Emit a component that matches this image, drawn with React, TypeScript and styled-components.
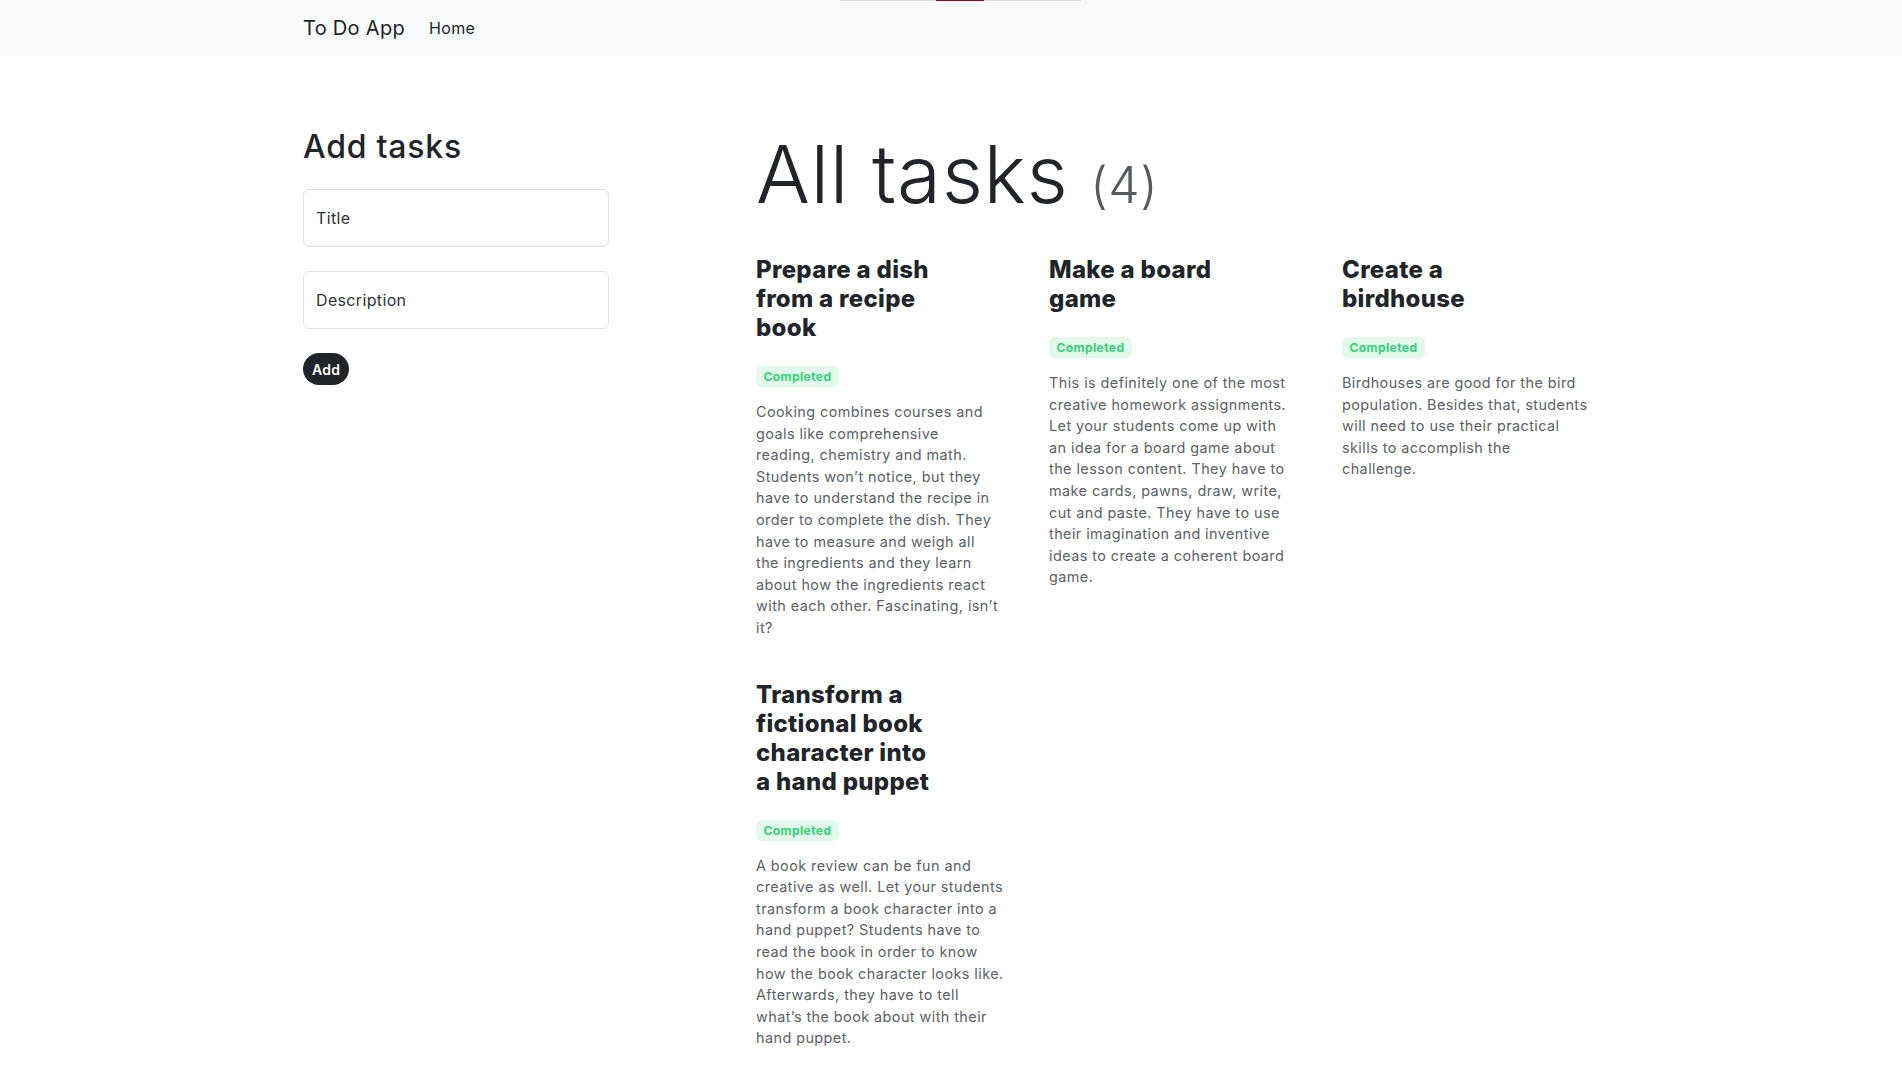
import React from "react";
import styled, { createGlobalStyle } from "styled-components";

const GlobalStyle = createGlobalStyle`
  * { box-sizing: border-box; }
  html, body { margin: 0; padding: 0; background: #ffffff; }
  body {
    font-family: Inter, "Open Sans", "Noto Sans", sans-serif;
    color: #212529;
    font-size: 16px;
    line-height: 1.5;
  }
`;

const LoadingTrack = styled.div`
  position: absolute;
  top: 0;
  left: 840px;
  width: 241px;
  height: 1px;
  background: #dcdee3;
`;

const LoadingFill = styled.div`
  position: absolute;
  top: 0;
  left: 96px;
  width: 48px;
  height: 1px;
  background: #8a0025;
`;

const Navbar = styled.nav`
  background: #f8f9fa;
  height: 56px;
  display: flex;
  align-items: center;
`;

const NavInner = styled.div`
  width: 1296px;
  margin: 0 auto;
  display: flex;
  align-items: center;
`;

const Brand = styled.a`
  font-size: 20px;
  line-height: 30px;
  letter-spacing: 0.3px;
  color: #212529;
  text-decoration: none;
  margin-right: 16px;
`;

const NavLink = styled.a`
  font-size: 16px;
  line-height: 24px;
  letter-spacing: 0.35px;
  color: #212529;
  text-decoration: none;
  padding: 8px;
`;

const Main = styled.main`
  width: 1296px;
  margin: 0 auto;
  padding-top: 70px;
  padding-bottom: 40px;
  display: grid;
  grid-template-columns: 306px 1fr;
  column-gap: 147px;
  align-items: start;
`;

const FormColumn = styled.section`
  display: flex;
  flex-direction: column;
  align-items: flex-start;
  padding-top: 2px;
`;

const FormTitle = styled.h2`
  margin: 0 0 23px;
  font-size: 32px;
  font-weight: 500;
  line-height: 1.2;
  letter-spacing: 0.75px;
`;

const Field = styled.input`
  width: 100%;
  height: 58px;
  margin: 0 0 24px;
  padding: 0 12px;
  border: 1px solid #dee2e6;
  border-radius: 6px;
  background: #fff;
  font-family: inherit;
  font-size: 16px;
  letter-spacing: 0.35px;
  color: #212529;
  outline: none;

  &::placeholder {
    color: #2f3337;
    opacity: 1;
  }
`;

const AddButton = styled.button`
  height: 32px;
  padding: 0 9px;
  border: none;
  border-radius: 50rem;
  background: #212529;
  color: #fff;
  font-family: inherit;
  font-size: 14px;
  font-weight: 600;
  letter-spacing: 0.3px;
  cursor: pointer;
`;

const TasksColumn = styled.section`
  display: flex;
  flex-direction: column;
`;

const TasksHeading = styled.h1`
  margin: 0 0 33px;
  font-size: 80px;
  font-weight: 300;
  line-height: 1.2;
  letter-spacing: 0.6px;
  display: flex;
  align-items: baseline;
  gap: 22px;
`;

const Count = styled.span`
  font-size: 50px;
  font-weight: 300;
  color: #555a5f;
  letter-spacing: 0.5px;
`;

const TaskGrid = styled.div`
  display: grid;
  grid-template-columns: repeat(3, 244px);
  column-gap: 49px;
  row-gap: 41px;
  align-items: start;
`;

const Card = styled.article`
  display: flex;
  flex-direction: column;
  align-items: flex-start;
`;

const TaskTitle = styled.h4`
  margin: 0 0 24px;
  max-width: 182px;
  font-size: 24px;
  font-weight: 800;
  line-height: 29px;
  letter-spacing: 0.3px;
  color: #212529;
`;

const Badge = styled.span<{ $done: boolean }>`
  display: inline-block;
  padding: 4px 7.5px;
  border-radius: 6px;
  font-size: 12px;
  font-weight: 700;
  line-height: 13px;
  letter-spacing: 0.42px;
  color: ${(p) => (p.$done ? "#33d17a" : "#d1a033")};
  background: ${(p) => (p.$done ? "#e1f8ea" : "#fbf1dc")};
  margin-bottom: 14px;
`;

const Description = styled.p`
  margin: 0;
  width: 260px;
  white-space: pre-line;
  font-size: 14.4px;
  line-height: 21.6px;
  letter-spacing: 0.44px;
  color: #5c6166;
`;

type Task = { title: string; lines: string[]; completed: boolean };

const tasks: Task[] = [
  {
    title: "Prepare a dish from a recipe book",
    lines: [
      "Cooking combines courses and",
      "goals like comprehensive",
      "reading, chemistry and math.",
      "Students won’t notice, but they",
      "have to understand the recipe in",
      "order to complete the dish. They",
      "have to measure and weigh all",
      "the ingredients and they learn",
      "about how the ingredients react",
      "with each other. Fascinating, isn’t",
      "it?",
    ],
    completed: true,
  },
  {
    title: "Make a board game",
    lines: [
      "This is definitely one of the most",
      "creative homework assignments.",
      "Let your students come up with",
      "an idea for a board game about",
      "the lesson content. They have to",
      "make cards, pawns, draw, write,",
      "cut and paste. They have to use",
      "their imagination and inventive",
      "ideas to create a coherent board",
      "game.",
    ],
    completed: true,
  },
  {
    title: "Create a birdhouse",
    lines: [
      "Birdhouses are good for the bird",
      "population. Besides that, students",
      "will need to use their practical",
      "skills to accomplish the",
      "challenge.",
    ],
    completed: true,
  },
  {
    title: "Transform a fictional book character into a hand puppet",
    lines: [
      "A book review can be fun and",
      "creative as well. Let your students",
      "transform a book character into a",
      "hand puppet? Students have to",
      "read the book in order to know",
      "how the book character looks like.",
      "Afterwards, they have to tell",
      "what’s the book about with their",
      "hand puppet.",
    ],
    completed: true,
  },
];

export default function App() {
  return (
    <>
      <GlobalStyle />
      <LoadingTrack>
        <LoadingFill />
      </LoadingTrack>
      <Navbar>
        <NavInner>
          <Brand href="#">To Do App</Brand>
          <NavLink href="#">Home</NavLink>
        </NavInner>
      </Navbar>
      <Main>
        <FormColumn>
          <FormTitle>Add tasks</FormTitle>
          <Field placeholder="Title" />
          <Field placeholder="Description" />
          <AddButton>Add</AddButton>
        </FormColumn>
        <TasksColumn>
          <TasksHeading>
            All tasks <Count>(4)</Count>
          </TasksHeading>
          <TaskGrid>
            {tasks.map((t) => (
              <Card key={t.title}>
                <TaskTitle>{t.title}</TaskTitle>
                <Badge $done={t.completed}>{t.completed ? "Completed" : "Pending"}</Badge>
                <Description>{t.lines.join("\n")}</Description>
              </Card>
            ))}
          </TaskGrid>
        </TasksColumn>
      </Main>
    </>
  );
}
